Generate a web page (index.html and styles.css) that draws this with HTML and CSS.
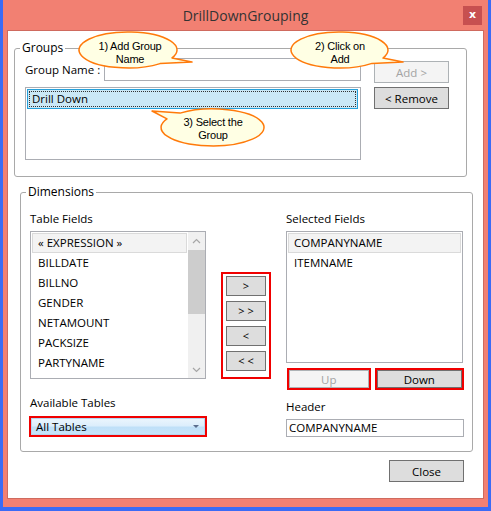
FILE: index.html
```html
<!DOCTYPE html>
<html>
<head>
<meta charset="utf-8">
<link rel="stylesheet" href="styles.css">
</head>
<body>
<div class="window">
  <div class="frame">
    <div class="titlebar">
      <span class="title">DrillDownGrouping</span>
      <span class="close-x">x</span>
    </div>
    <div class="client">
      <fieldset class="box groups">
        <legend>Groups</legend>
        <div class="box-body">
          <div class="g-row1">
            <span class="gn-label">Group Name :</span>
            <div class="textbox gname"></div>
            <button class="btn disabled add">Add &gt;</button>
          </div>
          <div class="g-row2">
            <div class="listbox glist">
              <div class="sel-item"><div class="sel-inner">Drill Down</div></div>
            </div>
            <button class="btn remove">&lt; Remove</button>
          </div>
        </div>
      </fieldset>

      <fieldset class="box dims">
        <legend>Dimensions</legend>
        <div class="box-body">
          <div class="d-top">
            <div class="col1">
              <div class="lbl">Table Fields</div>
              <div class="listbox tfields">
                <div class="items">
                  <div class="item hl">« EXPRESSION »</div>
                  <div class="item">BILLDATE</div>
                  <div class="item">BILLNO</div>
                  <div class="item">GENDER</div>
                  <div class="item">NETAMOUNT</div>
                  <div class="item">PACKSIZE</div>
                  <div class="item">PARTYNAME</div>
                </div>
                <div class="scrollbar">
                  <div class="sb-arrow"><svg width="9" height="6" viewBox="0 0 9 6"><path d="M1 5 L4.5 1.5 L8 5" fill="none" stroke="#A6A6A6" stroke-width="1.2"/></svg></div>
                  <div class="sb-thumb"></div>
                  <div class="sb-track"></div>
                  <div class="sb-arrow"><svg width="9" height="6" viewBox="0 0 9 6"><path d="M1 1 L4.5 4.5 L8 1" fill="none" stroke="#A6A6A6" stroke-width="1.2"/></svg></div>
                </div>
              </div>
            </div>
            <div class="movers">
              <button class="btn mv">&gt;</button>
              <button class="btn mv">&gt; &gt;</button>
              <button class="btn mv">&lt;</button>
              <button class="btn mv">&lt; &lt;</button>
            </div>
            <div class="col3">
              <div class="lbl">Selected Fields</div>
              <div class="listbox sfields">
                <div class="items">
                  <div class="item hl">COMPANYNAME</div>
                  <div class="item">ITEMNAME</div>
                </div>
              </div>
              <div class="updown">
                <div class="rf up-f"><button class="btn disabled">Up</button></div>
                <div class="rf down-f"><button class="btn">Down</button></div>
              </div>
            </div>
          </div>
          <div class="d-bot">
            <div class="col1b">
              <div class="lbl">Available Tables</div>
              <div class="rf combo-f">
                <div class="combo"><span>All Tables</span><svg width="6" height="4" viewBox="0 0 6 4"><path d="M0 0 L6 0 L3 3 Z" fill="#5B6E8E"/></svg></div>
              </div>
            </div>
            <div class="col3b">
              <div class="lbl">Header</div>
              <div class="textbox header">COMPANYNAME</div>
            </div>
          </div>
        </div>
      </fieldset>

      <div class="footer">
        <button class="btn close-btn">Close</button>
      </div>
    </div>
  </div>

  <svg class="callouts" width="491" height="511" viewBox="0 0 491 511">
    <g class="bubble">
      <path d="M172 57.9 L192 62 L160 63.6 A49 18 0 1 1 172 57.9 Z"/>
      <path d="M383 58 L403 62 L372 63.4 A48.5 18 0 1 1 383 58 Z"/>
      <path d="M167 118.8 L152 111 L180 113.1 A51.5 18.5 0 1 1 167 118.8 Z"/>
    </g>
    <g class="btext">
      <text x="130" y="49.5">1) Add Group</text>
      <text x="130" y="62.5">Name</text>
      <text x="340" y="49.5">2) Click on</text>
      <text x="340" y="62.5">Add</text>
      <text x="213" y="125.5">3) Select the</text>
      <text x="213" y="138.5">Group</text>
    </g>
  </svg>
</div>
</body>
</html>
```
FILE: styles.css
```css
* { box-sizing: border-box; }
body { margin: 0; }

.window {
  position: relative;
  width: 491px;
  height: 511px;
  background: #3B6BF5;
  padding: 0 3px 4px 3px;
  font-family: "Open Sans", "DejaVu Sans", sans-serif;
  font-size: 11.5px;
  color: #000;
}

.frame {
  height: 507px;
  background: #F28072;
  padding: 0 4px 8px 4px;
  display: flex;
  flex-direction: column;
}

.titlebar {
  height: 30px;
  display: grid;
  grid-template-columns: 1fr auto 1fr;
}
.title {
  grid-column: 2;
  line-height: 31px;
  font-size: 14px;
  color: #333;
}
.close-x {
  grid-column: 3;
  justify-self: end;
  align-self: start;
  margin: 6px 2px 0 0;
  width: 19px;
  height: 19px;
  background: #C75050;
  color: #fff;
  font-family: "DejaVu Sans", sans-serif;
  font-weight: bold;
  font-size: 11px;
  line-height: 17px;
  text-align: center;
}

.client {
  flex: 1;
  background: #fff;
  border: 1px solid #CF6A5E;
  display: flex;
  flex-direction: column;
}

.box {
  margin: 0;
  padding: 0;
  border: 1px solid #A9A9A9;
  border-radius: 3px;
  width: 453px;
  min-width: 0;
}
.box legend {
  font-size: 12px;
  line-height: 16px;
  padding: 0 2px;
  margin-left: 5px;
}

.groups { margin: 9px 0 0 6px; }
.groups .box-body { padding: 2px 0 16px 10px; }

.g-row1 { display: flex; align-items: flex-start; }
.gn-label { width: 79px; line-height: 23px; }
.textbox {
  border: 1px solid #ABADB3;
  background: #fff;
}
.gname { width: 257px; height: 23px; }

.btn {
  font-family: inherit;
  font-size: 11.5px;
  color: #000;
  background: #DDDDDD;
  border: 1px solid #707070;
  padding: 0;
  margin: 0;
}
.btn.disabled {
  background: #F4F4F4;
  border-color: #ADB2B5;
  color: #A3A3A3;
}
.add { margin: 3px 0 0 13px; width: 75px; height: 22px; }

.g-row2 { display: flex; align-items: flex-start; margin-top: 4px; }
.listbox {
  border: 1px solid #ABADB3;
  background: #fff;
}
.glist { width: 336px; height: 73px; padding: 1px 2px 1px 1px; }
.sel-item {
  height: 20px;
  border: 1px solid #26A0DA;
  background: #CBE8F6;
  padding: 1px;
}
.sel-inner {
  height: 100%;
  border: 1px dotted #333;
  line-height: 14px;
  padding-left: 2px;
}
.remove { margin-left: 13px; width: 75px; height: 22px; }

.dims { margin: 7px 0 0 12px; }
.dims .box-body { padding: 11px 0 14px 9px; }

.lbl { line-height: 16px; }

.d-top { display: flex; align-items: flex-start; }
.col1 { width: 176px; }
.tfields {
  margin-top: 4px;
  height: 148px;
  display: flex;
}
.items { flex: 1; padding: 1px; }
.item {
  height: 20px;
  line-height: 18px;
  padding-left: 5px;
  border: 1px solid transparent;
}
.item.hl { background: #F3F3F3; border-color: #DADADA; }

.scrollbar {
  width: 17px;
  background: #F0F0F0;
  display: flex;
  flex-direction: column;
}
.sb-arrow {
  height: 17px;
  display: flex;
  align-items: center;
  justify-content: center;
}
.sb-thumb { height: 64px; background: #CDCDCD; margin: 1px 0; }
.sb-track { flex: 1; }

.movers {
  margin: 61px 0 0 15px;
  width: 50px;
  height: 107px;
  border: 2px solid #F00000;
  padding: 2px 0 0 3px;
  display: flex;
  flex-direction: column;
  gap: 5px;
}
.mv { width: 40px; height: 20px; font-size: 11px; line-height: 16px; }

.col3 { margin-left: 15px; width: 178px; }
.sfields { margin-top: 4px; width: 177px; height: 132px; }

.updown { display: flex; margin-top: 5px; }
.rf { border: 2px solid #F00000; display: flex; }
.rf .btn { flex: 1; }
.up-f { margin-left: 1px; width: 84px; height: 22px; }
.down-f { margin-left: 4px; width: 90px; height: 22px; }

.d-bot { display: flex; margin-top: 5px; }
.col1b { margin-left: -1px; width: 178px; }
.col1b .lbl { padding-left: 1px; margin-bottom: 5px; }
.combo-f { height: 21px; }
.combo {
  flex: 1;
  display: flex;
  align-items: center;
  justify-content: space-between;
  padding: 0 5px 0 4px;
  background: linear-gradient(#EAF5FD 0%, #DCEEFC 45%, #BFE0F8 55%, #C6E4FA 100%);
  border: 1px solid #B6D6F0;
}
.col3b { margin-left: 79px; padding-top: 4px; width: 178px; }
.col3b .lbl { margin-bottom: 4px; }
.header { height: 18px; line-height: 16px; padding-left: 2px; }

.footer { display: flex; justify-content: flex-end; margin-top: 8px; padding-right: 19px; }
.close-btn { width: 75px; height: 22px; }

.callouts { position: absolute; left: 0; top: 0; pointer-events: none; }
.bubble path { fill: #FFFFE4; stroke: #FF7A0A; stroke-width: 1.5; stroke-linejoin: round; }
.btext text {
  font-family: "Liberation Sans", Arial, sans-serif;
  font-size: 11px;
  letter-spacing: -0.2px;
  text-anchor: middle;
  fill: #000;
}
```
